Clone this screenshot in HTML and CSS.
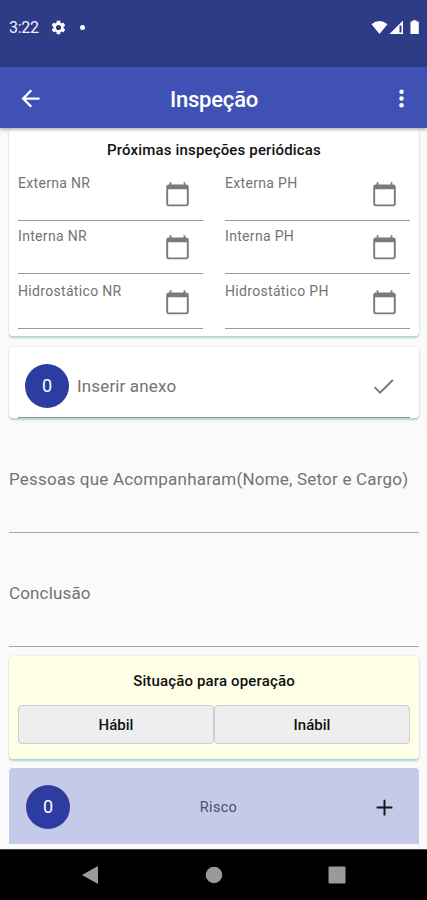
FILE: index.html
```html
<!DOCTYPE html>
<html lang="pt-BR">
<head>
<meta charset="utf-8">
<title>Inspeção</title>
<link rel="stylesheet" href="styles.css">
</head>
<body>
<svg class="defs" width="0" height="0" aria-hidden="true">
  <symbol id="calendar" viewBox="0 0 24 24"><path d="M20 3h-1V1h-1.600v2H6.600V1H5v2H4c-1.100 0-2 .9-2 2v15.500c0 1.100.9 2 2 2h16c1.100 0 2-.9 2-2V5c0-1.100-.9-2-2-2zm.3 17.300a.6.600 0 0 1-.6.600H4.300a.6.600 0 0 1-.6-.6V7.400h16.600z"/></symbol>
</svg>
<div class="screen">
  <header class="status">
    <span class="time">3:22</span>
    <svg class="gear" viewBox="0 0 24 24"><path fill-rule="evenodd" d="M19.140 12.940c.04-.3.060-.61.060-.94 0-.32-.020-.64-.070-.94l2.030-1.580c.18-.14.230-.41.120-.61l-1.920-3.320c-.12-.22-.37-.29-.59-.22l-2.390.96c-.5-.38-1.030-.7-1.620-.94l-.36-2.540c-.04-.24-.24-.41-.48-.41h-3.840c-.24 0-.43.170-.47.410l-.36 2.540c-.59.240-1.130.570-1.620.940l-2.390-.96c-.22-.08-.47 0-.59.220L2.740 8.870c-.12.210-.080.470.120.610l2.030 1.580c-.05.300-.09.630-.09.940s.020.640.070.940l-2.030 1.580c-.18.140-.23.410-.12.610l1.920 3.320c.12.220.37.290.59.220l2.390-.96c.5.380 1.030.700 1.620.940l.36 2.540c.05.240.240.410.480.410h3.840c.24 0 .440-.17.470-.41l.36-2.540c.59-.24 1.130-.56 1.620-.94l2.390.96c.22.080.470 0 .590-.22l1.920-3.320c.12-.22.070-.47-.12-.61l-2.010-1.580zM12 15.600A3.600 3.600 0 1 1 12 8.400a3.600 3.600 0 0 1 0 7.200z"/></svg>
    <i class="dot"></i>
    <svg class="signals" viewBox="0 0 49 16" width="49" height="16">
      <path d="M.5 4.200Q8.500-2.200 16.500 4.200L8.500 14z"/>
      <path fill-rule="evenodd" d="M32 .5V14H18.500zM28.500 5.500V12.500H30.500V5.500z"/>
      <path d="M39.500 1.500h2V.3h4v1.200h2.300V14h-8.300z"/>
    </svg>
  </header>
  <nav class="appbar">
    <svg class="back" viewBox="0 0 24 24"><path d="M20 11H7.830l5.590-5.590L12 4l-8 8 8 8 1.410-1.410L7.830 13H20v-2z"/></svg>
    <h1>Inspeção</h1>
    <svg class="more" viewBox="0 0 24 24"><circle cx="12" cy="6" r="2"/><circle cx="12" cy="12" r="2"/><circle cx="12" cy="18" r="2"/></svg>
  </nav>
  <main>
    <section class="card periodic">
      <h2>Próximas inspeções periódicas</h2>
      <div class="dates">
        <div class="date"><span>Externa NR</span><svg><use href="#calendar"/></svg></div>
        <div class="date"><span>Externa PH</span><svg><use href="#calendar"/></svg></div>
        <div class="date"><span>Interna NR</span><svg><use href="#calendar"/></svg></div>
        <div class="date"><span>Interna PH</span><svg><use href="#calendar"/></svg></div>
        <div class="date"><span>Hidrostático NR</span><svg><use href="#calendar"/></svg></div>
        <div class="date"><span>Hidrostático PH</span><svg><use href="#calendar"/></svg></div>
      </div>
    </section>
    <section class="card attach">
      <div class="attach-row">
        <b class="badge">0</b>
        <span>Inserir anexo</span>
        <svg class="check" viewBox="0 0 24 24"><path d="M4 12.500l5 5L20.300 6.200"/></svg>
      </div>
    </section>
    <div class="field people"><label>Pessoas que Acompanharam(Nome, Setor e Cargo)</label></div>
    <div class="field conclusion"><label>Conclusão</label></div>
    <section class="card operation">
      <h2>Situação para operação</h2>
      <div class="buttons"><button>Hábil</button><button>Inábil</button></div>
    </section>
    <section class="risk">
      <b class="badge">0</b>
      <span>Risco</span>
      <svg class="plus" viewBox="0 0 24 24"><path d="M12 5v14M5 12h14"/></svg>
    </section>
  </main>
  <footer class="navbar">
    <svg viewBox="0 0 20 20"><path d="M1 10L17 1v18z"/></svg>
    <svg viewBox="0 0 20 20"><circle cx="10" cy="10" r="8.300"/></svg>
    <svg viewBox="0 0 20 20"><rect x="1.500" y="1.500" width="17" height="17" rx="1"/></svg>
  </footer>
</div>
</body>
</html>
```
FILE: styles.css
```css
* { box-sizing: border-box; }
body { margin: 0; font-family: Roboto, sans-serif; color: #111; }
h1, h2 { margin: 0; }
svg { display: block; flex: none; }
.defs { position: absolute; }
.screen { width: 427px; height: 900px; display: flex; flex-direction: column; background: #fafafa; overflow: hidden; }

.status { height: 67px; flex: none; background: #2e3c87; color: #f2f3fb; fill: #fff; display: flex; align-items: flex-start; padding: 18px 7px 0 9px; }
.time { width: 41px; font-size: 16px; line-height: 20px; letter-spacing: -.3px; }
.gear { width: 17px; height: 17px; margin-top: 1px; }
.dot { width: 5px; height: 5px; border-radius: 50%; background: #fff; margin: 7px 0 0 13px; }
.signals { margin: 2px 0 0 auto; }

.appbar { height: 61px; flex: none; background: #3f51b5; color: #fff; fill: #fff; display: flex; align-items: center; justify-content: space-between; padding: 1px 12px 0 17px; box-shadow: 0 1px 4px rgba(0,0,0,.4); z-index: 1; }
.appbar h1 { font-size: 22px; font-weight: 500; line-height: 28px; letter-spacing: -.2px; padding: 3px 4px 0 0; }
.back, .more { width: 27px; height: 27px; }

main { flex: 1; padding: 0 8px 0 9px; overflow: hidden; display: flex; flex-direction: column; }
.card { flex: none; background: #fff; border-radius: 4px; box-shadow: 0 2px 2px #acd4d5, 0 0 2px rgba(0,0,0,.14); }
.card h2 { font-size: 15px; font-weight: 500; line-height: 20px; text-align: center; }

.periodic { height: 208px; padding: 12px 9px 0; }
.periodic h2 { letter-spacing: .16px; }
.dates { display: grid; grid-template-columns: 185px 185px; grid-template-rows: 61px 53px 55px; justify-content: space-between; }
.date { border-bottom: 1px solid #999; display: flex; justify-content: space-between; align-items: flex-end; padding: 0 12.5px 12px 0; }
.date span { font-size: 14px; line-height: 18px; margin-bottom: 16.5px; color: #737373; letter-spacing: .32px; }
.date svg { width: 27px; height: 27px; fill: #7a7a7a; }

.attach { height: 71px; margin-top: 11px; padding: 0 9px; }
.attach-row { height: 71px; display: flex; align-items: center; padding: 8px 13px 0 7px; border-bottom: 1px solid #8b9b9d; }
.badge { width: 44px; height: 44px; flex: none; border-radius: 50%; background: #2c3ca0; color: #fff; font-size: 18px; font-weight: 400; line-height: 44px; text-align: center; }
.attach span { margin-left: 8px; font-size: 17px; letter-spacing: .15px; color: #737373; flex: 1; }
.check { width: 27px; height: 27px; fill: none; stroke: #777; stroke-width: 1.7; }

.field { flex: none; height: 114px; border-bottom: 1px solid #a6a6a6; display: flex; align-items: flex-end; color: #737373; font-size: 17px; line-height: 24px; }
.people { height: 115px; letter-spacing: .21px; }
.field label { margin-bottom: 41px; white-space: nowrap; }
.conclusion { letter-spacing: .15px; }

.operation { height: 103px; margin-top: 9px; background: #feffe6; padding: 15px 9px 0; }
.operation h2 { letter-spacing: .15px; }
.buttons { display: grid; grid-template-columns: 1fr 1fr; height: 39px; margin-top: 14px; }
.buttons button { font: 500 15px Roboto, sans-serif; color: #111; background: #eee; border: 1px solid #ccc; border-radius: 4px; padding: 0; }

.risk { flex: none; height: 76px; margin-top: 9px; background: #c5cae9; border-radius: 4px 4px 0 0; display: flex; align-items: center; justify-content: space-between; padding: 2px 21px 0 17px; }
.risk span { font-size: 14.5px; letter-spacing: .3px; color: #4c4e63; margin-right: 4px; }
.plus { width: 27px; height: 27px; fill: none; stroke: #15151d; stroke-width: 1.7; }

.navbar { height: 51px; flex: none; background: #000; border-top: 1px solid #444; fill: #9a9a9a; display: flex; justify-content: center; gap: 103px; align-items: center; }
.navbar svg { width: 20px; height: 20px; }
```
